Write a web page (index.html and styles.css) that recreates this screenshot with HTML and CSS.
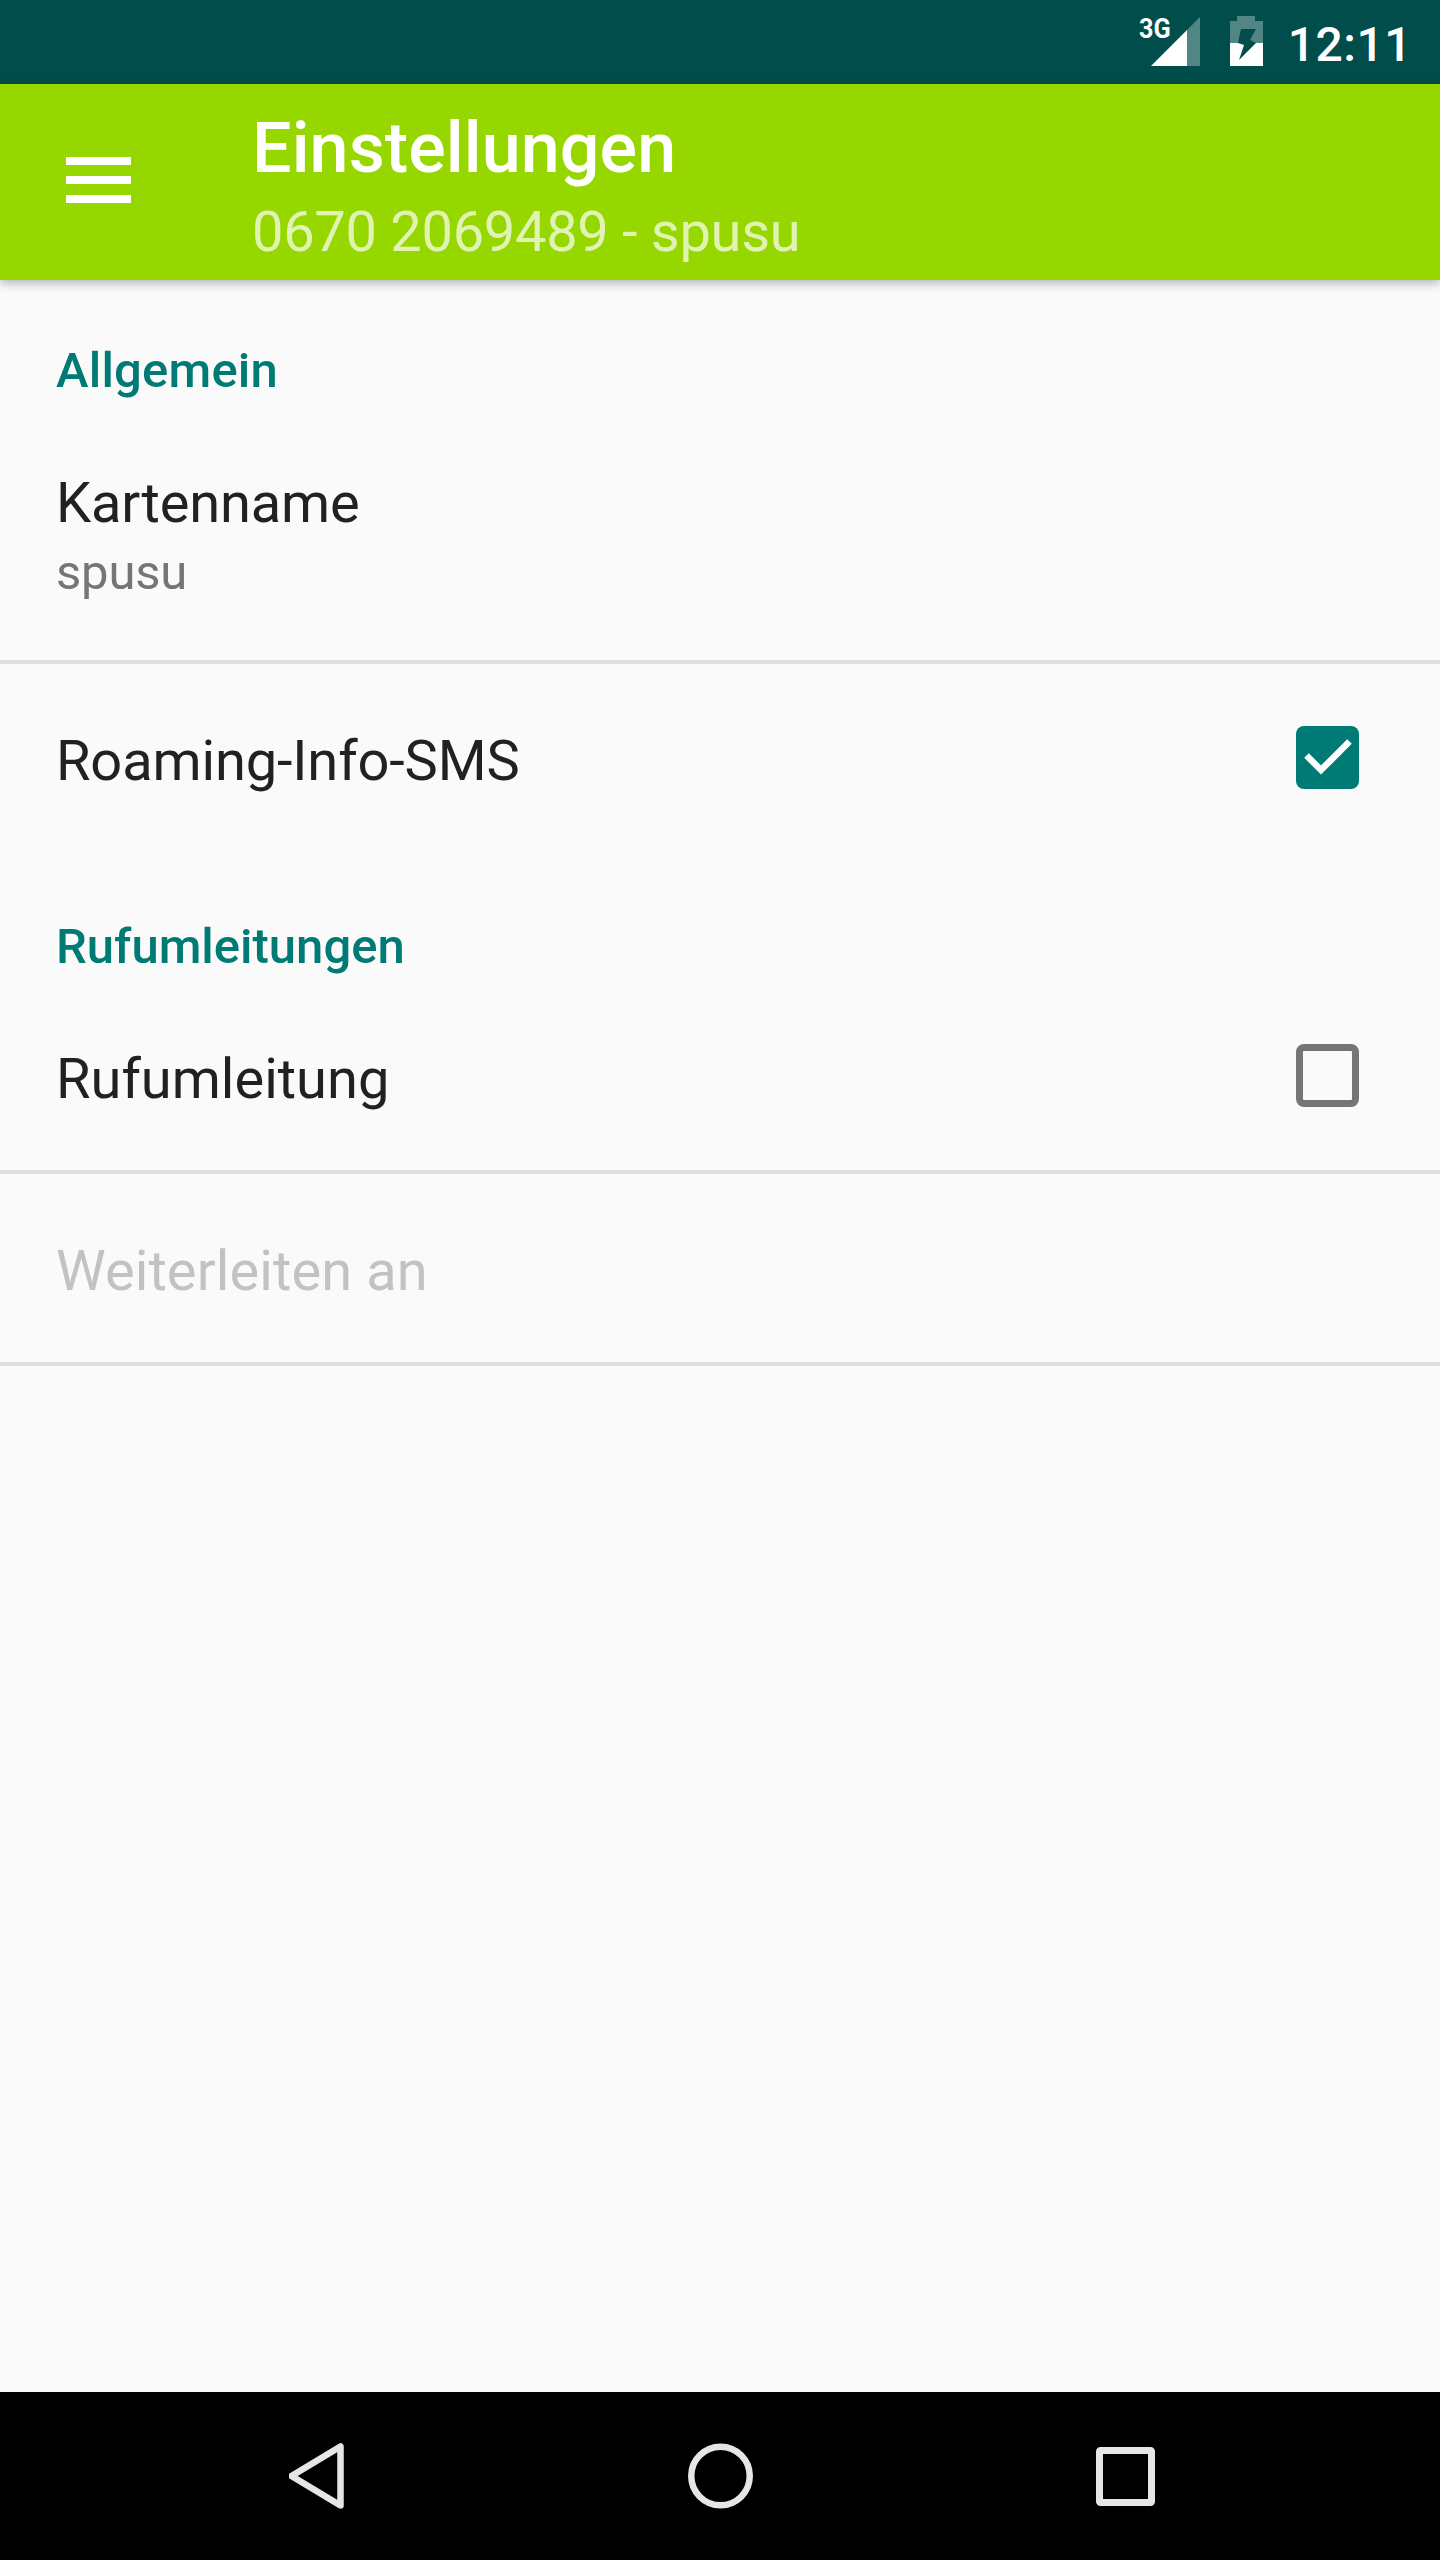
FILE: index.html
```html
<!DOCTYPE html>
<html>
<head>
  <title>Einstellungen</title>
  <link rel="stylesheet" href="styles.css">
</head>
<body>
  <div class="screen">
    <div class="status-bar">
      <div class="signal">
        <span class="net-type">3G</span>
        <svg width="49" height="49" viewBox="0 0 49 49">
          <path d="M49 0V49H36V13Z" fill="#fff" fill-opacity="0.32"/>
          <path d="M36 13V49H0Z" fill="#fff"/>
        </svg>
      </div>
      <svg class="battery" width="33" height="50" viewBox="0 0 33 50">
        <path d="M7 0H25V5H33V27H0V5H7Z" fill="#fff" fill-opacity="0.32"/>
        <path d="M0 27H33V50H0Z" fill="#fff"/>
        <path d="M11 13H26L20 24L26 27L9 44L14 29L8 27Z" fill="#004d4c"/>
      </svg>
      <span class="clock">12:11</span>
    </div>

    <div class="toolbar">
      <div class="menu-btn">
        <span></span><span></span><span></span>
      </div>
      <div class="toolbar-text">
        <div class="toolbar-title">Einstellungen</div>
        <div class="toolbar-sub">0670 2069489 - spusu</div>
      </div>
    </div>

    <div class="content">
      <div class="section-head first">Allgemein</div>
      <div class="pref pref-name">
        <div class="pref-title">Kartenname</div>
        <div class="pref-summary">spusu</div>
      </div>
      <div class="pref pref-check pref-roaming">
        <div class="pref-title">Roaming-Info-SMS</div>
        <div class="checkbox checked">
          <svg width="63" height="63" viewBox="0 0 63 63">
            <path d="M10.500 29.500L25 44L53.500 15.500" fill="none" stroke="#fff" stroke-width="6.500"/>
          </svg>
        </div>
      </div>
      <div class="section-head">Rufumleitungen</div>
      <div class="pref pref-check pref-forward">
        <div class="pref-title">Rufumleitung</div>
        <div class="checkbox"></div>
      </div>
      <div class="pref pref-target">
        <div class="pref-title disabled">Weiterleiten an</div>
      </div>
    </div>

    <div class="nav-bar">
      <svg width="56" height="66" viewBox="0 0 56 66">
        <path d="M51.500 3.500V62.500L2.500 33Z" fill="none" stroke="#e6e6e6" stroke-width="6.500" stroke-linejoin="round"/>
      </svg>
      <svg width="65" height="66" viewBox="0 0 65 66">
        <circle cx="32.500" cy="33" r="29.250" fill="none" stroke="#e6e6e6" stroke-width="6.500"/>
      </svg>
      <svg width="59" height="59" viewBox="0 0 59 59">
        <rect x="3.500" y="3.500" width="52" height="52" rx="1" fill="none" stroke="#e6e6e6" stroke-width="7"/>
      </svg>
    </div>
  </div>
</body>
</html>
```

FILE: styles.css
```css
body {
  margin: 0;
  font-family: Roboto, sans-serif;
  background-color: #fafafa;
}

.screen {
  width: 1440px;
  height: 2560px;
  display: flex;
  flex-direction: column;
  overflow: hidden;
}

/* status bar */
.status-bar {
  height: 84px;
  background-color: #004d4c;
  display: flex;
  align-items: flex-start;
  justify-content: flex-end;
  padding-right: 28px;
  color: #fff;
}

.signal {
  position: relative;
  width: 49px;
  height: 49px;
  margin-top: 17px;
  margin-right: 30px;
}

.signal svg {
  display: block;
}

.net-type {
  position: absolute;
  left: -12px;
  top: -2px;
  font-size: 28px;
  line-height: 28px;
  font-weight: 700;
  transform: scaleX(0.9);
  transform-origin: left;
}

.battery {
  margin-top: 16px;
  margin-right: 25px;
}

.clock {
  font-size: 48px;
  font-weight: 500;
  line-height: 58px;
  margin-top: 16px;
  letter-spacing: 0.5px;
}

/* toolbar */
.toolbar {
  height: 196px;
  background-color: #97d700;
  display: flex;
  align-items: flex-start;
  position: relative;
  z-index: 1;
  box-shadow: 0 3px 10px rgba(0, 0, 0, 0.3);
}

.menu-btn {
  width: 65px;
  height: 46px;
  margin-top: 73px;
  margin-left: 66px;
  margin-right: 121px;
  display: flex;
  flex-direction: column;
  justify-content: space-between;
}

.menu-btn span {
  display: block;
  height: 8px;
  background-color: #fff;
}

.toolbar-text {
  padding-top: 23px;
}

.toolbar-title {
  color: #fff;
  font-size: 70px;
  font-weight: 500;
  line-height: 82px;
  letter-spacing: 0.1px;
}

.toolbar-sub {
  color: rgba(255, 255, 255, 0.7);
  font-size: 56px;
  line-height: 66px;
  margin-top: 10px;
  letter-spacing: -0.3px;
}

/* list */
.content {
  flex: 1;
  background-color: #fafafa;
}

.section-head {
  color: #007a74;
  font-size: 49px;
  font-weight: 500;
  line-height: 58px;
  padding: 59px 56px 6px;
}

.section-head.first {
  padding-top: 62px;
  letter-spacing: 0.2px;
}

.pref {
  box-sizing: border-box;
  height: 192px;
  padding: 64px 56px 0;
  border-bottom: 4px solid #dedede;
}

.pref-check {
  display: flex;
  align-items: flex-start;
  justify-content: space-between;
  padding-right: 81px;
}

.pref-name {
  height: 258px;
}

.pref-roaming {
  height: 195px;
  border-bottom: none;
}

.pref-title {
  color: #212121;
  font-size: 56px;
  line-height: 66px;
  letter-spacing: -0.15px;
}

.pref-forward .pref-title {
  letter-spacing: 0;
}

.pref-title.disabled {
  color: #c2c2c2;
  letter-spacing: 0.1px;
}

.pref-summary {
  color: #757575;
  font-size: 49px;
  line-height: 58px;
  margin-top: 8px;
  letter-spacing: -0.2px;
}

.checkbox {
  width: 63px;
  height: 63px;
  margin-top: -2px;
  box-sizing: border-box;
  border: 7px solid #757575;
  border-radius: 8px;
}

.checkbox.checked {
  background-color: #007a74;
  border: none;
}

.checkbox svg {
  display: block;
}

/* nav bar */
.nav-bar {
  height: 168px;
  background-color: #000;
  display: flex;
  align-items: center;
  padding-left: 289px;
  gap: 343px;
}
```
